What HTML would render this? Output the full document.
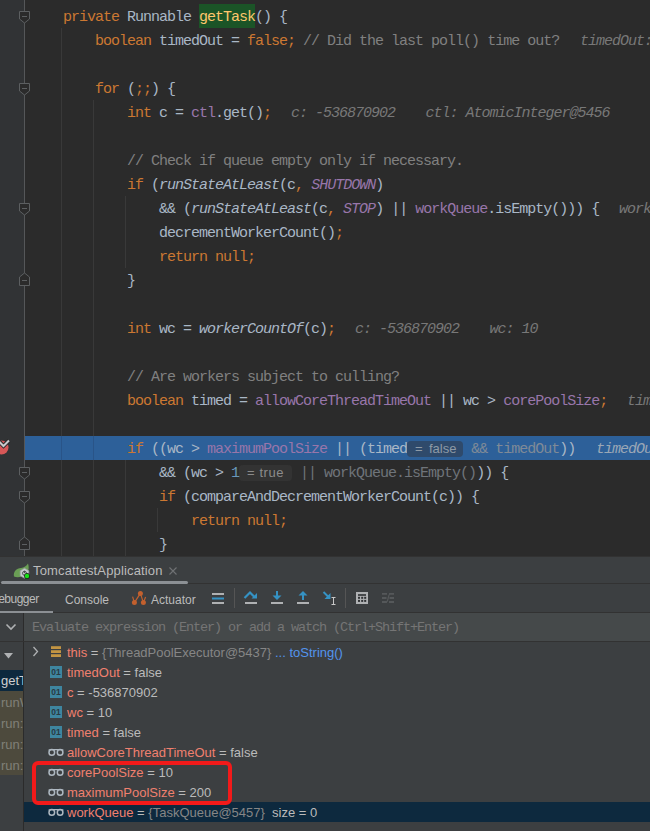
<!DOCTYPE html>
<html><head><meta charset="utf-8">
<style>
*{margin:0;padding:0;box-sizing:border-box}
html,body{width:650px;height:831px;overflow:hidden;background:#2b2b2b}
#ed{position:absolute;left:0;top:0;width:650px;height:556px;background:#2b2b2b;overflow:hidden}
#gut{position:absolute;left:0;top:0;width:25px;height:556px;background:#313335}
#gline{position:absolute;left:24px;top:0;width:1px;height:556px;background:#555759}
.ig{position:absolute;width:1px;background:#393939}
.ln{position:absolute;left:31px;height:24px;line-height:24px;margin-top:2px;white-space:pre;font-family:"Liberation Mono",monospace;font-size:15px;letter-spacing:-1px;color:#a9b7c6}
.k{color:#cc7832}
.f{color:#9876aa}
.fi{color:#9876aa;font-style:italic}
.it{font-style:italic}
.c{color:#808080}
.n{color:#6897bb}
.h{color:#787878;font-style:italic}
.bd{display:inline-block;height:16px;vertical-align:top;margin-top:3px;border-radius:4px}
.bd2{position:absolute;height:16px;border-radius:4px}
.bt{position:absolute;height:24px;line-height:24px;margin-top:1px;font-family:"Liberation Sans",sans-serif;font-size:13px}
.h2{color:#9aa7b6;font-style:italic}
.fold{position:absolute;left:19px;width:11px;height:12px}
.ui{position:absolute;height:20px;line-height:20px;white-space:pre;font-family:"Liberation Sans",sans-serif}
.mono2{position:absolute;height:28px;line-height:28px;white-space:pre;font-family:"Liberation Mono",monospace;font-size:13.5px;letter-spacing:-1.1px;color:#757575}
.var{position:absolute;left:67px;height:20px;line-height:20px;margin-top:1px;white-space:pre;font-family:"Liberation Sans",sans-serif;font-size:13px;color:#bbbbbb}
.fr{left:1px;margin-top:1px;height:21px;line-height:21px;font-size:13px;color:#808078;width:22px;overflow:hidden}
.vn{color:#f0806f}
#panel{position:absolute;left:0;top:556px;width:650px;height:275px;background:#3c3f41;font-family:"Liberation Sans",sans-serif;color:#bbbbbb;font-size:12px}
</style></head><body>
<div id="ed">
 <div id="gut"></div>
 <div id="gline"></div>
 <svg style="position:absolute;left:0;top:0" width="40" height="556"><path d="M19.5 11.5 H29.5 V19 L24.5 23 L19.5 19 Z" fill="#2b2b2b" stroke="#5c5f61"/><path d="M22 16.5 H27" stroke="#5c5f61"/><path d="M19.5 83.5 H29.5 V91 L24.5 95 L19.5 91 Z" fill="#2b2b2b" stroke="#5c5f61"/><path d="M22 88.5 H27" stroke="#5c5f61"/><path d="M19.5 203.5 H29.5 V211 L24.5 215 L19.5 211 Z" fill="#2b2b2b" stroke="#5c5f61"/><path d="M22 208.5 H27" stroke="#5c5f61"/><path d="M19.5 467.5 H29.5 V475 L24.5 479 L19.5 475 Z" fill="#2b2b2b" stroke="#5c5f61"/><path d="M22 472.5 H27" stroke="#5c5f61"/><path d="M19.5 491.5 H29.5 V499 L24.5 503 L19.5 499 Z" fill="#2b2b2b" stroke="#5c5f61"/><path d="M22 496.5 H27" stroke="#5c5f61"/><path d="M19.5 285.5 H29.5 V277 L24.5 273 L19.5 277 Z" fill="#2b2b2b" stroke="#5c5f61"/><path d="M22 280.5 H27" stroke="#5c5f61"/><path d="M19.5 549.5 H29.5 V541 L24.5 537 L19.5 541 Z" fill="#2b2b2b" stroke="#5c5f61"/><path d="M22 544.5 H27" stroke="#5c5f61"/><circle cx="1.5" cy="447.5" r="7" fill="#d65757"/><path d="M-1 441.5 L3.5 446 L9 440.5" fill="none" stroke="#2b2b2b" stroke-width="4"/><path d="M-1 441.5 L3.5 446 L9 440.5" fill="none" stroke="#c9cbcd" stroke-width="2"/></svg>
 <div class="ig" style="left:61px;top:28px;height:528px"></div>
 <div class="ig" style="left:93px;top:100px;height:456px"></div>
 <div class="ig" style="left:125px;top:196px;height:72px"></div>
 <div class="ig" style="left:125px;top:460px;height:96px"></div>
 <div class="ig" style="left:157px;top:508px;height:24px"></div>

 <div style="position:absolute;left:199px;top:4px;width:56px;height:24px;background:#1b5427"></div>
 <div class="ln" style="top:4px">    <span class="k">private</span> Runnable <span style="color:#ffc66d">getTask</span>() {</div>
 <div class="ln" style="top:28px">        <span class="k">boolean</span> timedOut = <span class="k">false;</span> <span class="c">// Did the last poll() time out?</span></div>
 <div class="ln" style="top:76px">        <span class="k">for</span> (<span class="k">;;</span>) {</div>
 <div class="ln" style="top:100px">            <span class="k">int</span> c = <span class="f">ctl</span>.get()<span class="k">;</span></div>
 <div class="ln" style="top:148px">            <span class="c">// Check if queue empty only if necessary.</span></div>
 <div class="ln" style="top:172px">            <span class="k">if</span> (<span class="it">runStateAtLeast</span>(c<span class="k">,</span> <span class="fi">SHUTDOWN</span>)</div>
 <div class="ln" style="top:196px">                &amp;&amp; (<span class="it">runStateAtLeast</span>(c<span class="k">,</span> <span class="fi">STOP</span>) || <span class="f">workQueue</span>.isEmpty())) {</div>
 <div class="ln" style="top:220px">                decrementWorkerCount()<span class="k">;</span></div>
 <div class="ln" style="top:244px">                <span class="k">return null;</span></div>
 <div class="ln" style="top:268px">            }</div>
 <div class="ln" style="top:316px">            <span class="k">int</span> wc = <span class="it">workerCountOf</span>(c)<span class="k">;</span></div>
 <div class="ln" style="top:364px">            <span class="c">// Are workers subject to culling?</span></div>
 <div class="ln" style="top:388px">            <span class="k">boolean</span> timed = <span class="f">allowCoreThreadTimeOut</span> || wc &gt; <span class="f">corePoolSize</span><span class="k">;</span></div>

 <div class="ln h" style="top:28px;left:580px">timedOut: false</div>
 <div class="ln h" style="top:100px;left:291px">c: -536870902</div><div class="ln h" style="top:100px;left:425.5px">ctl: AtomicInteger@5456</div>
 <div class="ln h" style="top:196px;left:619px">workQueue: size = 0</div>
 <div class="ln h" style="top:316px;left:355px">c: -536870902</div><div class="ln h" style="top:316px;left:489.5px">wc: 10</div>
 <div class="ln h" style="top:388px;left:627px">timed: false</div>
 <div style="position:absolute;left:25px;top:436px;width:625px;height:24px;background:#2d6099"></div>
 <div class="ig" style="left:61px;top:436px;height:24px;background:#295488"></div>
 <div class="ig" style="left:93px;top:436px;height:24px;background:#295488"></div>
 <div class="ln" style="top:436px">            <span class="k">if</span> ((wc &gt; <span class="f">maximumPoolSize</span> || (timed<span class="bd" style="width:56px;background:#2f4a6b"></span> <span style="color:#7f8a97">&amp;&amp; timedOut</span>))</div>
 <div class="bt" style="left:415px;top:436px;color:#8e9aa6">=</div><div class="bt" style="left:429px;top:436px;color:#8e9aa6">false</div>
 <div class="ln h2" style="top:436px;left:596px">timedOut: false</div>
 <div class="bd2" style="left:239px;top:465px;width:53px;background:#333333"></div>
 <div class="ln" style="top:460px">                &amp;&amp; (wc &gt; <span class="n">1</span><span style="display:inline-block;width:53px"></span> <span style="color:#6f747a">|| workQueue.isEmpty()</span>)) {</div>
 <div class="bt" style="left:247px;top:460px;color:#8a8a8a">=</div><div class="bt" style="left:259.5px;top:460px;color:#8c8c8c;letter-spacing:0.5px">true</div>
 <div class="ln" style="top:484px">                <span class="k">if</span> (compareAndDecrementWorkerCount(c)) {</div>
 <div class="ln" style="top:508px">                    <span class="k">return null;</span></div>
 <div class="ln" style="top:532px">                }</div>
</div>
<div id="panel">
 <div style="position:absolute;left:0;top:0;width:650px;height:1px;background:#323232"></div>
 <div style="position:absolute;left:0;top:27px;width:650px;height:1px;background:#323232"></div>
 <div style="position:absolute;left:1px;top:25px;width:187px;height:3px;border-radius:2px;background:#8c9094"></div>
 <svg style="position:absolute;left:12px;top:6px" width="20" height="18">
  <path d="M2 14.5 C1 9.5 4.5 6.5 9 6 C12 5.5 14.5 4 16 1.5 C17 4.5 17 8 15.5 10 L10 14.5 C7 15.5 4 15.5 2 14.5 Z" fill="#6a9e55"/>
  <path d="M8.2 8.7 L12.5 6.3 L16.8 8.7 L16.8 13.8 L12.5 16.2 L8.2 13.8 Z" fill="#c5c8cc" stroke="#9a9da1" stroke-width="0.7"/>
  <circle cx="12.5" cy="11.3" r="2" fill="none" stroke="#4e5155" stroke-width="1"/><path d="M12.5 8.8 V11" stroke="#4e5155" stroke-width="1"/>
  <circle cx="15" cy="14" r="2.9" fill="#1b2a1b"/>
  <circle cx="15" cy="14" r="2.2" fill="#18e018"/>
 </svg>
 <div class="ui" style="left:33px;top:5px;font-size:13px;letter-spacing:0.15px;color:#bbbbbb">TomcattestApplication</div>
 <svg style="position:absolute;left:168px;top:10px" width="10" height="10"><path d="M1.5 1.5 L8.5 8.5 M8.5 1.5 L1.5 8.5" stroke="#707274" stroke-width="1.1"/></svg>
 <div style="position:absolute;left:0;top:56px;width:650px;height:1px;background:#323232"></div>
 <div style="position:absolute;left:0;top:55px;width:53px;height:2px;background:#8c9094"></div>
 <div class="ui" style="left:-10px;top:33px;font-size:12px;letter-spacing:-0.5px;color:#bbbbbb">Debugger</div>
 <div class="ui" style="left:65px;top:33.5px;font-size:12px;color:#bbbbbb">Console</div>
 <svg style="position:absolute;left:130px;top:34px" width="18" height="17">
  <path d="M10.4 3.4 L4.4 12.6 M10.4 3.4 L13.4 12.6 M4.4 12.6 L2.6 6.6 M13.4 12.6 L15.6 7" stroke="#c2602e" stroke-width="1.2"/>
  <circle cx="10.4" cy="3.4" r="2.5" fill="#c2602e"/><circle cx="4.4" cy="12.6" r="2.5" fill="#c2602e"/><circle cx="13.4" cy="12.6" r="2.5" fill="#c2602e"/>
 </svg>
 <div class="ui" style="left:151px;top:33.5px;font-size:12px;color:#bbbbbb">Actuator</div>
 <svg style="position:absolute;left:200px;top:28px" width="200" height="28">
  <rect x="12" y="9" width="12" height="2" fill="#afb1b3"/><rect x="12" y="13.5" width="12" height="2" fill="#3592c4"/><rect x="12" y="18" width="12" height="2" fill="#afb1b3"/>
  <rect x="34" y="4" width="1" height="20" fill="#555555"/>
  <path d="M44.5 14 L50 8.5 L54.5 13" fill="none" stroke="#3592c4" stroke-width="2.2"/><path d="M51.5 14.5 L57 14.5 L57 9 Z" fill="#3592c4"/><rect x="45" y="18" width="12" height="2" fill="#afb1b3"/>
  <path d="M77 7 V13" stroke="#3592c4" stroke-width="2"/><path d="M72.5 11.5 L81.5 11.5 L77 16 Z" fill="#3592c4"/><rect x="71" y="18" width="12" height="2" fill="#afb1b3"/>
  <path d="M103 10 V16" stroke="#3592c4" stroke-width="2"/><path d="M98.5 11.5 L107.5 11.5 L103 7 Z" fill="#3592c4"/><rect x="97" y="18" width="12" height="2" fill="#afb1b3"/>
  <path d="M123.5 8 L128.5 13" stroke="#3592c4" stroke-width="2"/><path d="M124.5 15 L130.5 15 L130.5 9 Z" fill="#3592c4"/>
  <path d="M131.5 13.5 H135.5 M133.5 13.5 V20.5 M131.5 20.5 H135.5" stroke="#c8c8c8" stroke-width="1"/>
  <rect x="145" y="4" width="1" height="20" fill="#555555"/>
  <rect x="156" y="8" width="12" height="12" fill="#afb1b3"/><rect x="158" y="10.2" width="8" height="1.6" fill="#2f3133"/>
  <rect x="158" y="12.8" width="2" height="2" fill="#2f3133"/><rect x="161.2" y="12.8" width="2" height="2" fill="#2f3133"/><rect x="164.2" y="12.8" width="2" height="2" fill="#2f3133"/>
  <rect x="158" y="15.9" width="2" height="2" fill="#2f3133"/><rect x="161.2" y="15.9" width="2" height="2" fill="#2f3133"/><rect x="164.2" y="15.9" width="2" height="2" fill="#2f3133"/>
  <path d="M182 9.8 H187 M189 9.8 H194 M182 14 H186.5 M189.5 14 H194 M182 18 H187 M189 18 H194" stroke="#55585a" stroke-width="1.8" fill="none"/>
  <path d="M186.5 18 C188.5 17.5 188 10.5 190 9.8" stroke="#55585a" stroke-width="1.2" fill="none"/>
 </svg>
 <!-- left column -->
 <div style="position:absolute;left:23px;top:57px;width:1px;height:218px;background:#2b2b2b"></div>
 <div style="position:absolute;left:24px;top:57px;width:626px;height:28px;background:#45494a"></div>
 <div style="position:absolute;left:0;top:85px;width:650px;height:1px;background:#323232"></div>
 <div class="mono2" style="left:32px;top:58px">Evaluate expression (Enter) or add a watch (Ctrl+Shift+Enter)</div>
 <svg style="position:absolute;left:0;top:57px" width="23" height="60">
  <path d="M6.5 11.5 L11 16 L15.5 11.5" fill="none" stroke="#afb1b3" stroke-width="1.6"/>
  <path d="M4 40 L13 40 L8.5 45.5 Z" fill="#afb1b3"/>
 </svg>
 <div style="position:absolute;left:0;top:114px;width:23px;height:21px;background:#0d293e"></div>
 <div class="ui fr" style="top:113px;color:#d0d0d0">getTask</div>
 <div style="position:absolute;left:0;top:135px;width:23px;height:84px;background:#4d4a3d"></div>
 <div class="ui fr" style="top:135px">runWorker</div>
 <div class="ui fr" style="top:156px">run:</div>
 <div class="ui fr" style="top:177px">run:</div>
 <div class="ui fr" style="top:198px">run:</div>
 <!-- variables -->
 <div style="position:absolute;left:24px;top:246px;width:626px;height:20px;background:#0d293e"></div>
 <svg style="position:absolute;left:24px;top:86px" width="50" height="190">
  <path d="M9.5 5 L13.5 9.5 L9.5 14" fill="none" stroke="#afb1b3" stroke-width="1.3"/>
  <rect x="27" y="4.2" width="10" height="2.8" fill="#c39543"/><rect x="27" y="8.2" width="10" height="2.8" fill="#c39543"/><rect x="27" y="12.2" width="10" height="2.8" fill="#c39543"/>
 </svg>
 <div class="var" style="top:86px"><span class="vn">this</span> = <span style="color:#868686">{ThreadPoolExecutor@5437}</span> <span style="color:#5394ec">... toString()</span></div>
 <div class="var" style="top:106px"><span class="vn">timedOut</span> = false</div>
 <div class="var" style="top:126px"><span class="vn">c</span> = -536870902</div>
 <div class="var" style="top:146px"><span class="vn">wc</span> = 10</div>
 <div class="var" style="top:166px"><span class="vn">timed</span> = false</div>
 <div class="var" style="top:186px"><span class="vn">allowCoreThreadTimeOut</span> = false</div>
 <div class="var" style="top:206px"><span class="vn">corePoolSize</span> = 10</div>
 <div class="var" style="top:226px"><span class="vn">maximumPoolSize</span> = 200</div>
 <div class="var" style="top:246px"><span class="vn">workQueue</span> = <span style="color:#868686">{TaskQueue@5457}</span>  size = 0</div>
 <svg style="position:absolute;left:48px;top:106px" width="16" height="160">
  <g><rect x="2" y="4" width="12" height="12" fill="#3e86a0"/><text x="8" y="13" font-family="Liberation Sans" font-size="8.5" font-weight="bold" text-anchor="middle" fill="#2a3a42">01</text></g>
  <g transform="translate(0,20)"><rect x="2" y="4" width="12" height="12" fill="#3e86a0"/><text x="8" y="13" font-family="Liberation Sans" font-size="8.5" font-weight="bold" text-anchor="middle" fill="#2a3a42">01</text></g>
  <g transform="translate(0,40)"><rect x="2" y="4" width="12" height="12" fill="#3e86a0"/><text x="8" y="13" font-family="Liberation Sans" font-size="8.5" font-weight="bold" text-anchor="middle" fill="#2a3a42">01</text></g>
  <g transform="translate(0,60)"><rect x="2" y="4" width="12" height="12" fill="#3e86a0"/><text x="8" y="13" font-family="Liberation Sans" font-size="8.5" font-weight="bold" text-anchor="middle" fill="#2a3a42">01</text></g>
 </svg>
 <svg style="position:absolute;left:46px;top:186px" width="20" height="80">
  <g id="gl"><circle cx="5.8" cy="10.4" r="2.8" fill="none" stroke="#aeb8c1" stroke-width="1.5"/><circle cx="14.1" cy="10.4" r="2.8" fill="none" stroke="#aeb8c1" stroke-width="1.5"/><path d="M2.6 8.2 Q3.5 7.6 5.8 7.6 H14.1 Q16.5 7.6 17.4 8.2" fill="none" stroke="#aeb8c1" stroke-width="1.3"/></g>
  <use href="#gl" y="20"/><use href="#gl" y="40"/><use href="#gl" y="60"/>
 </svg>
 <div style="position:absolute;left:31.5px;top:204.5px;width:200.5px;height:44px;border:4px solid #f21a1a;border-radius:6px"></div>
</div>
</body></html>
